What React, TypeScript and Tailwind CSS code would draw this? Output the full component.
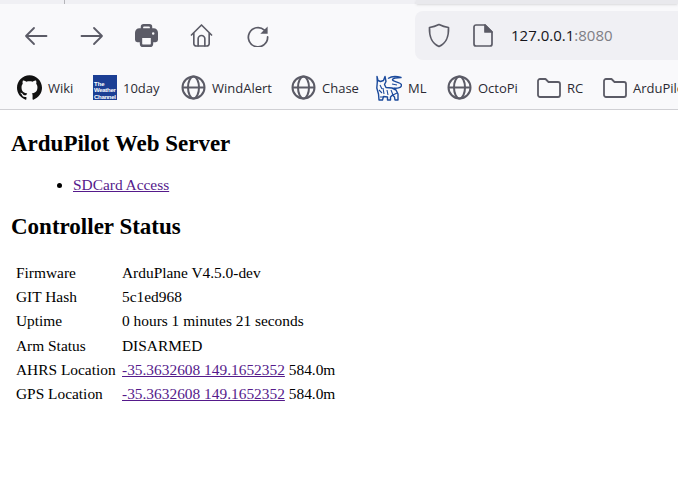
import { ReactNode } from 'react';
import { SiGithub } from 'react-icons/si';

const iconColor = '#5b5b66';

function Globe() {
  return (
    <svg width="25" height="25" viewBox="0 0 25 25" fill="none" stroke={iconColor} strokeWidth="2" className="shrink-0">
      <circle cx="12.5" cy="12.5" r="11" />
      <ellipse cx="12.5" cy="12.5" rx="5.5" ry="11" />
      <path d="M1.5 12.5h22" />
    </svg>
  );
}

function Folder() {
  return (
    <svg width="24" height="20" viewBox="0 0 24 20" fill="none" stroke={iconColor} strokeWidth="1.8" strokeLinejoin="round" className="shrink-0">
      <path d="M1 3a2 2 0 0 1 2-2h5.5l3 3H21a2 2 0 0 1 2 2v11a2 2 0 0 1-2 2H3a2 2 0 0 1-2-2z" />
    </svg>
  );
}

function WeatherLogo() {
  return (
    <div className="w-6 h-[25px] shrink-0 bg-[#1c3f94] text-white font-bold text-[6px] leading-[6.4px] pl-[1px] pt-[6px] flex flex-col" style={{ fontFamily: '"Liberation Sans", sans-serif' }}>
      <span>The</span>
      <span className="tracking-[-0.3px]">Weather</span>
      <span className="tracking-[-0.3px]">Channel</span>
    </div>
  );
}

// Merrill bull, roughly: dense blue outline with horns and a curled tail
function Bull() {
  return (
    <svg width="26" height="26" viewBox="0 0 26 26" fill="none" stroke="#1b4a9c" strokeWidth="1.4" strokeLinejoin="round" className="shrink-0">
      <path d="M1 1.500l1 4 2.500 1 3-1 1.500-4 1 5-1.500 3 1.500 3 6 .5 4 2 2 4v6h-3l-.5-3-2-2-2 2v3h-3v-3l-4-.5-1 3.500H3l-.5-6L.8 13l.5-6z" />
      <path d="M12 3.500C15 1.500 20 1 25 2.500c-3 0-8 .2-8.500 2.200-.5 2.300 9 2 9 5.500 0 3-5 3.300-8 2.800" />
      <path d="M4 10l2 4M3 15l3 3M7 13l1 6M11 15l1 5M15 15l2 5M21 18l-4 2M4 22h4M16 9l5 1" strokeWidth="1.1" />
    </svg>
  );
}

function Bookmark({ icon, label, width }: { icon: ReactNode; label: string; width: string }) {
  return (
    <div className={`flex items-center shrink-0 ${width}`}>
      {icon}
      <span className="ml-[6px] text-[13px] leading-5 text-[#2b2a33] whitespace-nowrap">{label}</span>
    </div>
  );
}

function ToolbarIcons() {
  return (
    <div className="flex items-center">
      <svg width="24" height="20" viewBox="0 0 24 20" fill="none" stroke={iconColor} strokeWidth="1.8" strokeLinecap="round" strokeLinejoin="round" className="ml-[24px]">
        <path d="M22.5 10H2M10 2l-8 8 8 8" />
      </svg>
      <svg width="24" height="20" viewBox="0 0 24 20" fill="none" stroke={iconColor} strokeWidth="1.8" strokeLinecap="round" strokeLinejoin="round" className="ml-[32px]">
        <path d="M1.5 10H22M14 2l8 8-8 8" />
      </svg>
      <svg width="23" height="25" viewBox="0 0 24 25" className="ml-[31px]">
        <path fill={iconColor} fillRule="evenodd" d="M6 5V3.500A3 3 0 0 1 9 .5h6a3 3 0 0 1 3 3V5h1.500A4.500 4.500 0 0 1 24 9.500V17a2.500 2.500 0 0 1-2.500 2.500H19V21a3.500 3.500 0 0 1-3.500 3.500h-7A3.500 3.500 0 0 1 5 21v-1.500H2.500A2.500 2.500 0 0 1 0 17V9.500A4.500 4.500 0 0 1 4.500 5zM8.500 5h7V3.500A.8.8 0 0 0 14.700 3H9.300a.8.8 0 0 0-.8.500zM7.500 15v6A1.200 1.200 0 0 0 8.700 22h6.600a1.200 1.200 0 0 0 1.200-1V15zM19 9a1.300 1.300 0 1 0 0 2.600A1.300 1.300 0 0 0 19 9z" />
      </svg>
      <svg width="23" height="25" viewBox="0 0 24 25" fill="none" stroke={iconColor} strokeWidth="1.7" strokeLinejoin="round" strokeLinecap="round" className="ml-[32px]">
        <path d="M1.500 12L12 1.500 22.500 12M4 9.500V21a2.500 2.500 0 0 0 2.500 2.500h11A2.500 2.500 0 0 0 20 21V9.500" />
        <path d="M8.500 23.500V16a3.500 3.500 0 0 1 7 0v7.500" />
      </svg>
      <svg width="22" height="22" viewBox="0 0 24 24" fill="none" className="ml-[34px]">
        <path d="M19 5.500A10.500 10.500 0 1 0 22.500 13" stroke={iconColor} strokeWidth="1.9" strokeLinecap="round" />
        <path d="M22.500 1.500V9.500H14.500z" fill={iconColor} />
      </svg>
    </div>
  );
}

function AddressBar() {
  return (
    <div className="w-[263px] h-[49px] shrink-0 rounded-l-lg bg-[#f0f0f4] flex items-center">
      <svg width="22" height="25" viewBox="0 0 22 25" fill="none" stroke={iconColor} strokeWidth="1.7" strokeLinejoin="round" className="ml-[13px] shrink-0">
        <path d="M11 1.500c3 1.500 6 2.500 9.500 3 .3 8-1 15-9.500 19C2.500 19.500 1.200 12.500 1.500 4.500c3.500-.5 6.500-1.500 9.500-3z" />
      </svg>
      <svg width="20" height="23" viewBox="0 0 20 23" fill="none" stroke={iconColor} strokeWidth="1.7" strokeLinejoin="round" className="ml-[23px] shrink-0">
        <path d="M3 1h9l7 7v12a2 2 0 0 1-2 2H3a2 2 0 0 1-2-2V3a2 2 0 0 1 2-2z" />
        <path d="M12 1v7h7z" fill={iconColor} />
      </svg>
      <span className="ml-[18px] text-[15px] text-[#15141a]">127.0.0.1<span className="text-[#7e7e85]">:8080</span></span>
    </div>
  );
}

const rows: { label: string; value: string; link?: boolean }[] = [
  { label: 'Firmware', value: 'ArduPlane V4.5.0-dev' },
  { label: 'GIT Hash', value: '5c1ed968' },
  { label: 'Uptime', value: '0 hours 1 minutes 21 seconds' },
  { label: 'Arm Status', value: 'DISARMED' },
  { label: 'AHRS Location', value: '-35.3632608 149.1652352', link: true },
  { label: 'GPS Location', value: '-35.3632608 149.1652352', link: true },
];

export default function App() {
  return (
    <div className="w-[678px] h-[502px] overflow-hidden bg-white">
      <header className="bg-[#f9f9fb] border-b border-[#d0d0d4]" style={{ fontFamily: '"Open Sans", "Noto Sans", sans-serif' }}>
        <div className="h-[4px] bg-[#f0f0f4] flex">
          <div className="w-[65px] border-r border-[#b5b5ba]" />
          <div className="ml-[351px] flex-1 bg-[#e9e9ed] shadow-sm" />
        </div>
        <div className="h-[60px] flex items-center justify-between overflow-hidden pt-[3px]">
          <ToolbarIcons />
          <AddressBar />
        </div>
        <div className="h-[45px] flex items-center overflow-hidden pl-[17px] pt-[2px]">
          <Bookmark width="w-[76px]" icon={<SiGithub size={25} color="#111" className="shrink-0" />} label="Wiki" />
          <Bookmark width="w-[88px]" icon={<WeatherLogo />} label="10day" />
          <Bookmark width="w-[110px]" icon={<Globe />} label="WindAlert" />
          <Bookmark width="w-[85px]" icon={<Globe />} label="Chase" />
          <Bookmark width="w-[71px]" icon={<Bull />} label="ML" />
          <Bookmark width="w-[90px]" icon={<Globe />} label="OctoPi" />
          <Bookmark width="w-[66px]" icon={<Folder />} label="RC" />
          <Bookmark width="w-[90px]" icon={<Folder />} label="ArduPilot" />
        </div>
      </header>
      <main className="px-[11px] text-black text-[15.4px] leading-[18px]" style={{ fontFamily: '"Liberation Serif", serif' }}>
        <h2 className="text-[23px] leading-[27px] font-bold mt-[20px]">ArduPilot Web Server</h2>
        <ul className="list-disc pl-[62px] mt-[19px]">
          <li>
            <a href="#" className="text-[#551a8b] underline">SDCard Access</a>
          </li>
        </ul>
        <h2 className="text-[23px] leading-[27px] font-bold mt-[19px]">Controller Status</h2>
        <table className="mt-[21px] ml-[5px] border-collapse">
          <tbody>
            {rows.map((row) => (
              <tr key={row.label} className="h-[24.2px]">
                <td className="w-[106px] p-0 whitespace-nowrap">{row.label}</td>
                <td className="p-0 whitespace-nowrap">
                  {row.link ? (
                    <>
                      <a href="#" className="text-[#551a8b] underline">{row.value}</a> 584.0m
                    </>
                  ) : (
                    row.value
                  )}
                </td>
              </tr>
            ))}
          </tbody>
        </table>
      </main>
    </div>
  );
}
